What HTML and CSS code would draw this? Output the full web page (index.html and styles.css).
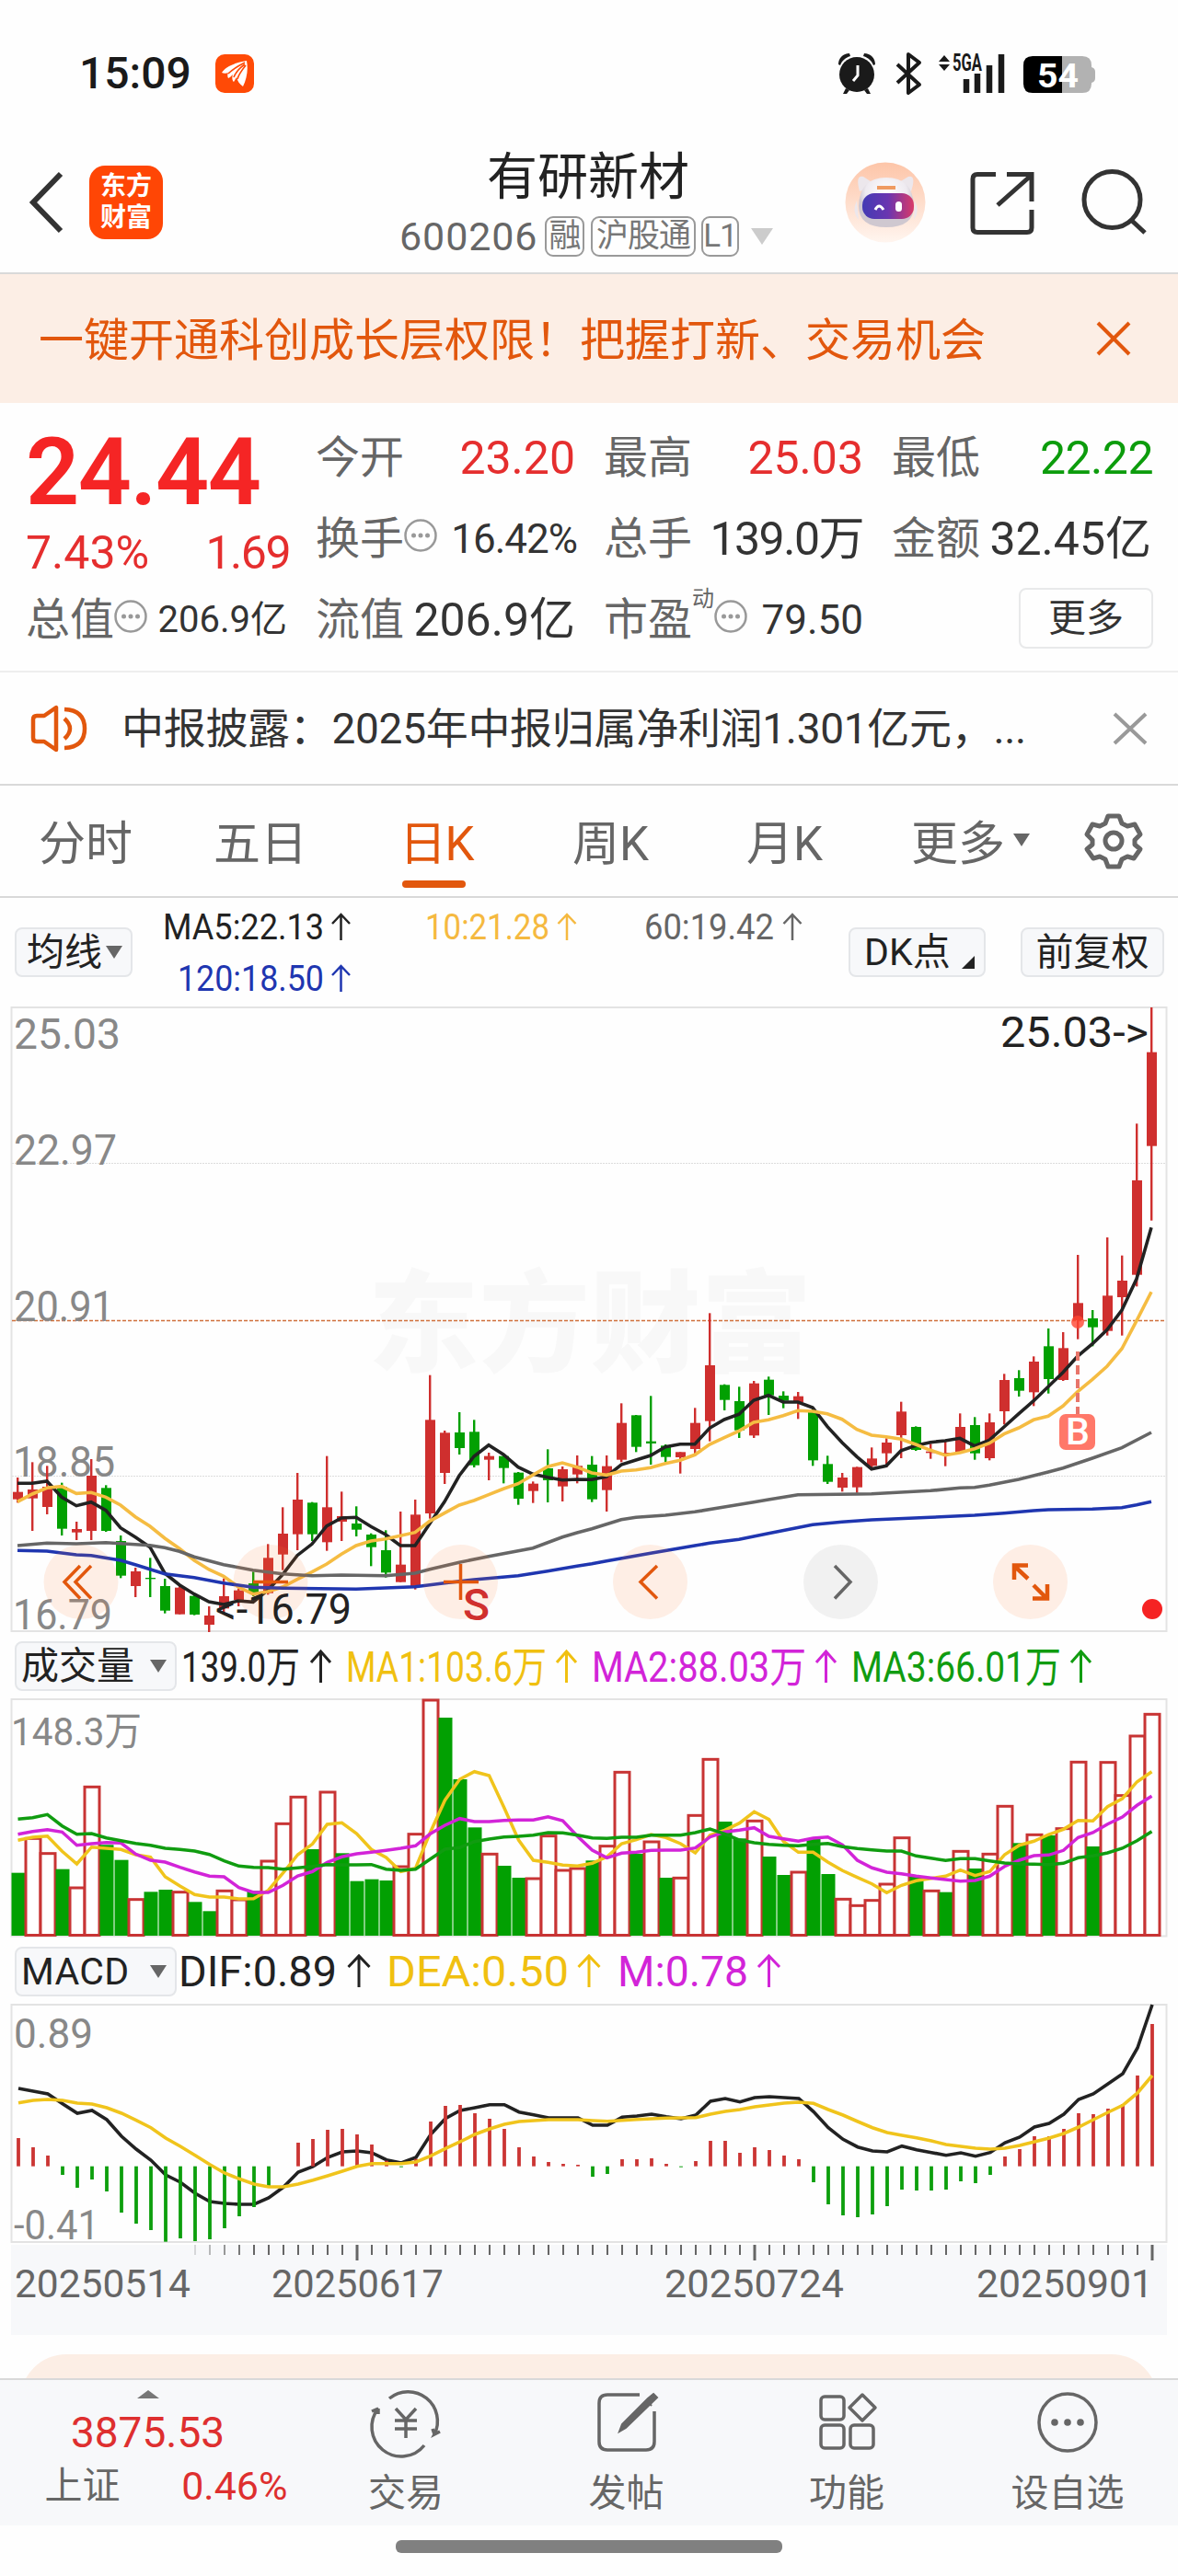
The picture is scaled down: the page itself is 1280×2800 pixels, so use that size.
FILE: index.html
```html
<!DOCTYPE html>
<html lang="zh-CN">
<head>
<meta charset="utf-8">
<title>有研新材 600206</title>
<link rel="stylesheet" href="styles.css">
</head>
<body>
<div class="status">
  <span class="clock">15:09</span>
  <svg class="app-badge" width="42" height="42" viewBox="0 0 42 42"><rect width="42" height="42" rx="10" fill="#ff4a06"/><path d="M34 7C22 9 11 13 7 20c2 1 5 1 7 0-1 2-1 4 0 6 2-1 3-2 5-4-1 3-1 6 1 8l3-5c1 4 3 7 7 10 4-8 6-18 4-28z" fill="#fff"/><path d="M32 9C26 12 19 16 14 21M32 11c-6 4-10 9-12 14M33 12c-4 5-8 10-9 15" stroke="#ff4a06" stroke-width="1.6" fill="none"/></svg>
  <svg class="status-icons" width="284" height="64" viewBox="908 48 284 64">
    <g fill="#1a1a1a"><circle cx="931" cy="81" r="19"/><path d="M911 70c0-7 5-12 12-12l1 3c-6 2-9 5-11 10zM951 70c0-7-5-12-12-12l-1 3c6 2 9 5 11 10zM919 96l-3 6h4l3-4zM943 96l3 6h-4l-3-4z"/></g>
    <path d="M932 71v11l-5 6" stroke="#fff" stroke-width="3" fill="none"/>
    <path d="M975 70l24 22-12 9V59l12 9-24 22" stroke="#1a1a1a" stroke-width="4" fill="none" stroke-linejoin="round"/>
    <path d="M1020 67l6-7 6 7zM1020 70l6 7 6-7z" fill="#1a1a1a"/>
    <text x="1035" y="77" class="net" textLength="32" lengthAdjust="spacingAndGlyphs">5GA</text>
    <path d="M1050 86v15M1062 80v21M1075 71v30M1088 59v42" stroke="#1a1a1a" stroke-width="6.500"/>
    <path d="M1154 61h22q10 0 10 10v2q4 1 4 5v7q0 4-4 5v1q0 10-10 10h-22z" fill="#b2b2b2"/>
    <path d="M1154 61v40h-32q-10 0-10-10V71q0-10 10-10z"/>
    <text x="1127" y="95" class="battery" textLength="45" lengthAdjust="spacingAndGlyphs">54</text>
  </svg>
</div>

<header class="header">
  <svg width="40" height="70" viewBox="30 184 40 70"><path d="M66 188L36 219l30 31" fill="none" stroke="#333" stroke-width="6"/></svg>
  <div class="brand">东方<br>财富</div>
  <div class="title-block">
    <h1>有研新材</h1>
    <div class="code"><span class="digits">600206</span><i class="tag t1">融</i><i class="tag t2">沪股通</i><i class="tag t3">L1</i><svg width="24" height="18"><path d="M0 0h24L12 18z" fill="#ccc"/></svg></div>
  </div>
  <svg class="actions" width="334" height="90" viewBox="916 173 334 90">
    <defs>
      <linearGradient id="halo" x2="0" y2="1"><stop stop-color="#fdc5a8"/><stop offset="1" stop-color="#fff5ef"/></linearGradient>
      <linearGradient id="visor"><stop stop-color="#433bb4"/><stop offset=".5" stop-color="#6a35b0"/><stop offset="1" stop-color="#d93a68"/></linearGradient>
      <radialGradient id="shell" cy=".3"><stop stop-color="#fff"/><stop offset=".75" stop-color="#eeeaf0"/><stop offset="1" stop-color="#cfc8d0"/></radialGradient>
    </defs>
    <circle cx="962" cy="218" r="43.500" fill="url(#halo)"/>
    <path d="M934 206Q929 188 938 190L952 199ZM990 206Q996 188 987 190L972 199ZM931 216q-6 12 2 21zM994 216q6 12-1 21z" fill="#ece7ec"/>
    <path d="M933 222Q934 191 963 191T993 222Q993 245 963 245T933 222Z" fill="url(#shell)"/>
    <rect x="937" y="208" width="56" height="28" rx="13" fill="url(#visor)"/>
    <path d="M951 226q4-8 9 0" stroke="#fff" stroke-width="3" fill="none"/><rect x="973" y="217" width="7" height="11" rx="3.500" fill="#fff"/>
    <path d="M953 202h20" stroke="#ef9b62" stroke-width="4" fill="none"/>
    <g fill="none" stroke="#333" stroke-width="5">
      <path d="M1082 187.500h-20q-5 0-5 5v53q0 5 5 5h54q5 0 5-5V226M1094 187.500h27V217M1120 189l-36 32"/>
      <circle cx="1208.500" cy="215" r="30.500"/><path d="M1229 237l15 14"/>
    </g>
  </svg>
</header>

<div class="banner"><span>一键开通科创成长层权限！把握打新、交易机会</span><svg width="38" height="38" viewBox="0 0 38 38"><path d="M2 2l34 34M36 2L2 36" stroke="#e2570d" stroke-width="4"/></svg></div>

<section class="quote">
  <div class="col first">
    <div class="price">24.44</div>
    <div class="change"><span>7.43%</span><span class="diff">1.69</span></div>
    <div class="cell"><span class="label">总值</span><svg class="info" viewBox="0 0 36 36"><use href="#info-dot"/></svg><b class="small">206.9亿</b></div>
  </div>
  <div class="col">
    <div class="cell"><span class="label">今开</span><b class="up">23.20</b></div>
    <div class="cell"><span class="label">换手</span><svg class="info" viewBox="0 0 36 36"><use href="#info-dot"/></svg><b class="mid turn">16.42%</b></div>
    <div class="cell"><span class="label">流值</span><b>206.9亿</b></div>
  </div>
  <div class="col">
    <div class="cell"><span class="label">最高</span><b class="up">25.03</b></div>
    <div class="cell"><span class="label">总手</span><b class="tight">139.0万</b></div>
    <div class="cell"><span class="label">市盈</span><sup>动</sup><svg class="info" viewBox="0 0 36 36"><use href="#info-dot"/></svg><b class="mid pe">79.50</b></div>
  </div>
  <div class="col">
    <div class="cell"><span class="label">最低</span><b class="down">22.22</b></div>
    <div class="cell"><span class="label">金额</span><b>32.45亿</b></div>
    <div class="cell end"><button class="more">更多</button></div>
  </div>
  <svg class="defs" width="0" height="0"><defs><g id="info-dot"><circle cx="18" cy="18" r="16.500" fill="none" stroke="#999" stroke-width="2.500"/><g fill="#999"><circle cx="10.500" cy="18" r="2.500"/><circle cx="18" cy="18" r="2.500"/><circle cx="25.500" cy="18" r="2.500"/></g></g></defs></svg>
</section>

<div class="notice">
  <svg width="62" height="52" viewBox="33 765 62 52" fill="none" stroke="#e2570d" stroke-width="4.500"><path d="M61 768v46l-13-9H40q-4 0-4-4V781q0-4 4-4h8zM70 780q12 11 0 22M70 770q22 1 22 21t-22 21" stroke-linejoin="round"/></svg>
  <span>中报披露：2025年中报归属净利润1.301亿元，...</span>
  <svg width="36" height="34" viewBox="0 0 36 34"><path d="M1 1l34 32M35 1L1 33" stroke="#999" stroke-width="4"/></svg>
</div>

<nav class="periods">
  <a>分时</a><a>五日</a><a class="on">日K</a><a>周K</a><a>月K</a><a>更多<svg width="18" height="14"><path d="M0 0h18L9 14z" fill="#666"/></svg></a>
  <svg class="gear" width="64" height="62" viewBox="-32 -31 64 62" fill="none" stroke="#666" stroke-width="5" stroke-linejoin="round"><circle r="9"/><path d="M-6-27H6L9-19 15-16 23-18 29-7 23-1V4L29 9 22 19 15 17 9 20 6 28H-6L-9 20-15 17-22 19-29 9-23 4V-1L-29-7-23-18-15-16-9-19Z"/></svg>
</nav>

<div class="averages">
  <button class="chip avg">均线<svg width="18" height="14"><path d="M0 0h18L9 14z" fill="#666"/></svg></button>
  <svg class="avg-values" width="700" height="110" viewBox="178 980 700 110">
    <g font-size="39">
    <text x="177" y="1021" textLength="175" lengthAdjust="spacingAndGlyphs" fill="#222">MA5:22.13</text>
    <text x="462" y="1021" textLength="135" lengthAdjust="spacingAndGlyphs" fill="#f5b940">10:21.28</text>
    <text x="700" y="1021" textLength="141" lengthAdjust="spacingAndGlyphs" fill="#666">60:19.42</text>
    <text x="193" y="1077" textLength="159" lengthAdjust="spacingAndGlyphs" fill="#1f36b0">120:18.50</text>
    </g>
    <g fill="none" stroke-width="2.500">
    <path d="M370.500 1022v-28M361 1004l9.500-10 9.500 10" stroke="#222"/>
    <path d="M616 1022v-28M606.500 1004l9.500-10 9.500 10" stroke="#f5b940"/>
    <path d="M861 1022v-28M851.500 1004l9.500-10 9.500 10" stroke="#666"/>
    <path d="M370.500 1078v-28M361 1060l9.500-10 9.500 10" stroke="#1f36b0"/>
    </g>
  </svg>
  <button class="chip dk">DK点<svg width="14" height="14"><path d="M14 0v14H0z" fill="#222"/></svg></button>
  <button class="chip adj">前复权</button>
</div>

<svg class="panel" width="1280" height="680" viewBox="0 1094 1280 680">
  <text class="mark" x="400" y="1482" textLength="482">东方财富</text>
  <path class="frame" d="M12.500 1095H1267.500V1773H12.500Z"/>
  <path class="dots" d="M13 1264.500H1267M13 1604.500H1267"/>
  <path d="M13 1435.500H1267" stroke="#d0703c" stroke-width="1.500" stroke-dasharray="4 2"/>
  <g class="axis" font-size="47">
    <text x="15" y="1140" textLength="116" lengthAdjust="spacingAndGlyphs">25.03</text>
    <text x="15" y="1266" textLength="112" lengthAdjust="spacingAndGlyphs">22.97</text>
    <text x="15" y="1436" textLength="109" lengthAdjust="spacingAndGlyphs">20.91</text>
    <text x="14" y="1605" textLength="111" lengthAdjust="spacingAndGlyphs">18.85</text>
    <text x="14" y="1771" textLength="108" lengthAdjust="spacingAndGlyphs">16.79</text>
  </g>
  <g id="candles"></g>
  <g fill="#fe7a35" fill-opacity=".12"><circle cx="88" cy="1719.500" r="40.500"/><circle cx="294" cy="1719.500" r="40.500"/><circle cx="500.500" cy="1719.500" r="40.500"/><circle cx="706.500" cy="1719.500" r="40.500"/><circle cx="1119.500" cy="1719.500" r="40.500"/><circle cx="913.500" cy="1719.500" r="40.500" fill="#000" fill-opacity=".05"/></g>
  <g fill="none" stroke="#e2570d" stroke-width="3.500">
    <path d="M87 1702L70 1719.500l17 18M99 1702L82 1719.500l17 18M275 1719.500h38M482 1719.500h38M500.500 1700v39M714 1702L696 1719.500l18 18"/>
    <path d="M1102 1717v-15.500h15M1102 1702l15 14M1138 1722v15.500h-16M1138 1738l-15-15" stroke-width="4.500"/>
    <path d="M907 1702l17 17.500-17 18" stroke="#666"/>
  </g>
  <text x="1087" y="1138" font-size="47" textLength="161" lengthAdjust="spacingAndGlyphs" fill="#222">25.03-&gt;</text>
  <text x="234" y="1765" font-size="47" textLength="148" lengthAdjust="spacingAndGlyphs" fill="#222">&lt;-16.79</text>
  <text x="503" y="1761" font-size="48" font-weight="500" fill="#d0302e">S</text>
  <path d="M1171 1469v68" stroke="#e8756a" stroke-width="4" stroke-dasharray="10 5"/>
  <rect x="1151" y="1537" width="39" height="39" rx="7" fill="#ff7869"/>
  <text x="1171" y="1570" font-size="41" text-anchor="middle" font-weight="500" fill="#fff">B</text>
  <circle cx="1171" cy="1437" r="7" fill="#ff4632" fill-opacity=".8"/>
  <circle cx="1252" cy="1749" r="11" fill="#f52323"/>
</svg>

<div class="legend">
  <button class="chip sub">成交量<svg width="18" height="14"><path d="M0 0h18L9 14z" fill="#666"/></svg></button>
  <svg width="1070" height="60" viewBox="192 1780 1070 60">
    <g font-size="46">
    <text x="197" y="1827" textLength="129" lengthAdjust="spacingAndGlyphs" fill="#222">139.0万</text>
    <text x="376" y="1827" textLength="218" lengthAdjust="spacingAndGlyphs" fill="#f0c010">MA1:103.6万</text>
    <text x="643" y="1827" textLength="233" lengthAdjust="spacingAndGlyphs" fill="#d224d8">MA2:88.03万</text>
    <text x="925" y="1827" textLength="228" lengthAdjust="spacingAndGlyphs" fill="#109c10">MA3:66.01万</text>
    </g>
    <g fill="none" stroke-width="3">
    <path d="M348.500 1828v-34M338 1806l10.500-12 10.500 12" stroke="#222"/>
    <path d="M615.500 1828v-34M605 1806l10.500-12 10.500 12" stroke="#f0c010"/>
    <path d="M897.500 1828v-34M887 1806l10.500-12 10.500 12" stroke="#d224d8"/>
    <path d="M1174.500 1828v-34M1164 1806l10.500-12 10.500 12" stroke="#109c10"/>
    </g>
  </svg>
</div>

<svg class="panel" width="1280" height="260" viewBox="0 1846 1280 260">
  <path class="frame" d="M12.500 1847H1267.500V2104.500H12.500Z"/>
  <g id="volume"></g>
  <text class="axis" x="12" y="1897" font-size="43" textLength="142" lengthAdjust="spacingAndGlyphs">148.3万</text>
</svg>

<div class="legend">
  <button class="chip sub macd">MACD<svg width="18" height="14"><path d="M0 0h18L9 14z" fill="#666"/></svg></button>
  <svg width="1070" height="60" viewBox="192 2113 1070 60">
    <g font-size="46">
    <text x="194" y="2159" textLength="172" lengthAdjust="spacingAndGlyphs" fill="#222">DIF:0.89</text>
    <text x="420" y="2159" textLength="198" lengthAdjust="spacingAndGlyphs" fill="#f0c010">DEA:0.50</text>
    <text x="671" y="2159" textLength="142" lengthAdjust="spacingAndGlyphs" fill="#d224d8">M:0.78</text>
    </g>
    <g fill="none" stroke-width="3">
    <path d="M390 2160v-34M378.500 2138l11.500-12 11.500 12" stroke="#222"/>
    <path d="M640 2160v-34M628.500 2138l11.500-12 11.500 12" stroke="#f0c010"/>
    <path d="M835.500 2160v-34M824 2138l11.500-12 11.500 12" stroke="#d224d8"/>
    </g>
  </svg>
</div>

<svg class="panel" width="1280" height="360" viewBox="0 2178 1280 360">
  <path class="frame" d="M12.500 2179H1267.500V2437H12.500Z"/>
  <rect x="12" y="2440" width="1256" height="98" fill="#f7f8fa"/>
  <g class="axis" font-size="44">
    <text x="15" y="2226" textLength="86" lengthAdjust="spacingAndGlyphs">0.89</text>
    <text x="15" y="2434" textLength="93" lengthAdjust="spacingAndGlyphs">-0.41</text>
  </g>
  <g id="macd"></g>
  <g font-size="43" fill="#666">
    <text x="16" y="2497" textLength="191" lengthAdjust="spacingAndGlyphs">20250514</text>
    <text x="295" y="2497" textLength="187" lengthAdjust="spacingAndGlyphs">20250617</text>
    <text x="722" y="2497" textLength="195" lengthAdjust="spacingAndGlyphs">20250724</text>
    <text x="1061" y="2497" textLength="192" lengthAdjust="spacingAndGlyphs">20250901</text>
  </g>
</svg>

<div class="peek"><div class="peek-card"></div></div>

<footer class="toolbar">
  <div class="index">
    <svg width="24" height="9"><path d="M12 0l12 9H0z" fill="#777"/></svg>
    <strong>3875.53</strong>
    <div class="index-row"><span>上证</span><em>0.46%</em></div>
  </div>
  <div class="tool"><svg width="80" height="70" viewBox="-40 -35 80 70" fill="none" stroke="#666" stroke-width="3.500"><path d="M-18-26A32 32 0 0 1 31 13L37 10M31 13L29 7M20 25A32 32 0 0 1-30-15L-37-12M-30-15V-9M-11-15L0-3 11-15M0-3V17M-12-2H12M-12 7H12"/></svg><span>交易</span></div>
  <div class="tool"><svg width="80" height="70" viewBox="-40 -35 80 70" fill="none" stroke="#666" stroke-width="3.500"><path d="M14-30H-21Q-30-30-30-21V21Q-30 30-21 30H21Q30 30 30 21V-12"/><path d="M29-31L33-27-1 6-8 10-5 2 23-26ZM22-24L27-18" fill="#666" stroke-width="2"/></svg><span>发帖</span></div>
  <div class="tool"><svg width="80" height="70" viewBox="-40 -35 80 70" fill="none" stroke="#666" stroke-width="3.500"><rect x="-28" y="-28" width="25" height="25" rx="4"/><rect x="-28" y="3" width="25" height="25" rx="4"/><rect x="4" y="3" width="25" height="25" rx="4"/><path d="M17-30L31-16 17-2 3-16Z" stroke-linejoin="round"/></svg><span>功能</span></div>
  <div class="tool"><svg width="80" height="70" viewBox="-40 -35 80 70"><circle r="31" fill="none" stroke="#666" stroke-width="3.500"/><g fill="#666"><circle cx="-14" r="3.800"/><circle r="3.800"/><circle cx="14" r="3.800"/></g></svg><span>设自选</span></div>
</footer>
<div class="home"><i></i></div>
<script src="chart.js"></script>
</body>
</html>
```
FILE: styles.css
```css
* { box-sizing: border-box; }
body {
  margin: 0;
  width: 1280px;
  height: 2800px;
  overflow: hidden;
  background: #fefefe;
  color: #333;
  font-family: Roboto, "Noto Sans CJK SC", sans-serif;
}
svg { display: block; flex: none; overflow: visible; }
svg text { font-family: Roboto, "Noto Sans CJK SC", sans-serif; }
button { font: inherit; padding: 0; background: none; }
i, em { font-style: normal; }

.status { display: flex; align-items: center; height: 160px; padding: 0 88px 0 86px; }
.clock { width: 148px; font-size: 48px; font-weight: 500; line-height: 56px; color: #1a1a1a; }
.status-icons { margin-left: auto; }
.net { font-size: 26px; font-weight: 700; fill: #1a1a1a; }
.battery { font-size: 36px; font-weight: 700; fill: #fff; }

.header {
  display: grid;
  grid-template-columns: 67px 80px 1fr 334px;
  align-items: center;
  height: 138px;
  padding: 0 30px 20px;
  border-bottom: 2px solid #d9d9d9;
}
.brand {
  height: 80px;
  padding: 6px 0;
  border-radius: 17px;
  background: #ff4605;
  color: #fff;
  font-size: 28px;
  font-weight: 700;
  line-height: 34px;
  text-align: center;
}
h1 { margin: 0 0 0 352px; font-size: 55px; font-weight: 400; line-height: 64px; color: #222; white-space: nowrap; }
.code { display: flex; align-items: center; margin: 11px 0 0 257px; height: 44px; font-size: 43px; color: #666; }
.digits { width: 158px; letter-spacing: .9px; }
.tag { height: 44px; border: 2px solid #999; border-radius: 9px; font-size: 35px; line-height: 39px; text-align: center; letter-spacing: -1px; color: #777; }
.t1 { width: 43px; margin-right: 7px; }
.t2 { width: 114px; margin-right: 6px; }
.t3 { width: 41px; margin-right: 13px; }

.banner { display: flex; align-items: center; justify-content: space-between; height: 140px; padding: 0 51px 0 42px; background: #fceee5; color: #e2570d; font-size: 49px; line-height: 60px; }
.banner span { padding-top: 5px; }

.quote { display: grid; grid-template-columns: repeat(4, 282px); column-gap: 31px; height: 293px; padding: 16px 0 0 30px; border-bottom: 2px solid #eee; }
.first { margin-left: -2px; }
.price { height: 117px; font-size: 102px; font-weight: 600; line-height: 119px; letter-spacing: -1.500px; color: #f52525; }
.change { display: flex; align-items: center; justify-content: space-between; height: 59px; font-size: 50px; color: #e52e2e; }
.diff { margin-right: -3px; letter-spacing: -1.500px; }
.cell { display: flex; align-items: center; justify-content: space-between; height: 88px; }
.label { font-size: 48px; line-height: 60px; color: #666; }
.cell b { font-size: 50px; font-weight: 400; line-height: 60px; white-space: nowrap; }
.cell b.up { color: #e52e2e; }
.cell b.down { margin-right: -2px; letter-spacing: -.5px; color: #0c9c0c; }
.cell b.small { font-size: 40px; }
.cell b.mid { font-size: 44px; }
.cell b.turn { margin-right: -2px; letter-spacing: -1px; }
.cell b.tight { letter-spacing: -1.500px; }
.cell .info { width: 36px; height: 36px; margin-top: -8px; }
.cell .info + b { margin-left: auto; }
.cell sup { align-self: flex-start; margin-top: 6px; font-size: 24px; line-height: 30px; color: #666; }
.cell.end { justify-content: flex-end; }
.more { width: 146px; height: 66px; margin: -5px -2px 0 0; border: 2px solid #e8e9ea; border-radius: 8px; font-size: 41px; line-height: 58px; color: #333; }
.defs { position: absolute; }

.notice { display: grid; grid-template-columns: 99px 1fr 36px; align-items: center; height: 123px; padding: 0 34px 0 33px; border-bottom: 2px solid #d9d9d9; font-size: 46px; line-height: 60px; letter-spacing: -.3px; }

.periods { display: grid; grid-template-columns: 190px 204px 186px 189px 179px 188px 64px; align-items: center; height: 122px; padding-left: 42px; border-bottom: 2px solid #d9d9d9; font-size: 51px; color: #666; }
.periods a { display: flex; align-items: center; height: 120px; padding-bottom: 2px; }
.periods a svg { margin-left: 9px; }
.periods .on { position: relative; margin-left: -2px; letter-spacing: -1.500px; color: #e2570d; }
.periods .on::after { content: ""; position: absolute; left: 3px; bottom: 9px; width: 69px; height: 8px; border-radius: 4px; background: #e2570d; }

.averages { display: flex; align-items: center; height: 118px; padding: 0 15px 0 16px; }
.chip { display: flex; align-items: center; height: 54px; border: 2px solid #e4e6e9; border-radius: 8px; background: #f7f8fa; font-size: 41px; line-height: 50px; color: #222; white-space: nowrap; }
.avg { width: 128px; margin-right: 34px; padding-left: 11px; }
.avg svg { margin-left: 4px; }
.avg-values { margin-right: 44px; }
.dk { width: 149px; padding-left: 15px; }
.dk svg { margin: 22px 0 0 12px; }
.adj { width: 156px; margin-left: auto; justify-content: center; }

.frame { fill: none; stroke: #e3e3e3; stroke-width: 2; }
.dots { stroke: #ddd; stroke-width: 1; stroke-dasharray: 2 1; }
.axis { fill: #888; }
.mark { font-size: 120px; font-weight: 900; fill: #f8f8f8; }
.legend { display: flex; align-items: center; height: 72px; padding-left: 16px; padding-top: 2px; }
.sub { width: 176px; padding: 0 9px 0 5px; justify-content: space-between; }
.macd { letter-spacing: .3px; }

.peek { height: 47px; padding: 21px 22px 0; overflow: hidden; }
.peek-card { height: 100px; border-radius: 50px; background: #fceee5; }
.toolbar { display: grid; grid-template-columns: 321px 240px 239px 240px 240px; height: 160px; border-top: 2px solid #d9d9d9; background: #f7f8fa; }
.index { display: flex; flex-direction: column; align-items: center; padding-top: 11px; color: #de2f2f; }
.index strong { margin-top: 10px; font-size: 46px; font-weight: 400; line-height: 54px; }
.index-row { display: flex; justify-content: space-between; width: 264px; margin: 1px 0 0 40px; font-size: 43px; line-height: 60px; }
.index-row span { font-size: 41px; color: #666; }
.tool { display: flex; flex-direction: column; align-items: center; padding-top: 11px; font-size: 41px; line-height: 56px; color: #666; }
.tool span { margin-top: 14px; }
.home { display: flex; justify-content: center; padding-top: 16px; }
.home i { width: 420px; height: 14px; border-radius: 6px; background: #808080; }
```
FILE: chart.js
```js
const NS = 'http://www.w3.org/2000/svg';
const RED = '#cf2f2e';
const GREEN = '#02a002';

function add(parent, tag, attrs) {
  const el = document.createElementNS(NS, tag);
  for (const key in attrs) el.setAttribute(key, attrs[key]);
  parent.appendChild(el);
}

// Draws a polyline; each point is a value or [index, value] when days are skipped.
function line(parent, points, x0, toY, color, width) {
  const pts = points.map((p, i) => Array.isArray(p) ? [x0 + 16 * p[0], toY(p[1])] : [x0 + 16 * i, toY(p)]);
  add(parent, 'polyline', { points: pts.map(p => p[0] + ',' + p[1].toFixed(1)).join(' '), fill: 'none', stroke: color, 'stroke-width': width || 3.6 });
}

// Daily candles: colour, high, body top, body bottom, low.
const candles = `r 558 605 629 640|r 508 597 626 732|r 520 588 654 678|g 575 588 725 747|r 702 726 737 762|r 498 552 732 762|g 583 592 732 735|g 747 765 878 886|r 852 864 912 948|g 820 885 889 948|g 888 912 992 1001|r 912 917 1004 1004|g 942 944 1005 1007|r 978 1008 1038 1062|r 887 945 985 998|r 920 926 957 978|g 865 903 935 945|r 775 820 935 940|r 655 741 809 860|r 543 630 743 795|g 638 640 743 765|r 488 655 769 797|r 604 684 702 765|g 652 708 728 750|g 740 744 785 847|g 730 795 868 884|r 669 842 899 899|r 630 679 915 923|r 224 370 675 692|r 405 412 543 579|g 345 411 462 483|g 370 409 518 525|r 477 488 500 567|g 485 488 527 577|g 540 542 627 647|r 571 578 602 641|g 466 528 567 639|r 522 531 587 636|r 486 520 548 577|g 488 516 629 638|r 486 521 599 669|r 316 380 500 508|g 354 355 458 475|g 292 440 447 516|g 450 454 491 507|r 475 475 492 545|r 331 380 465 487|r 22 192 374 440|g 254 256 305 339|g 262 309 404 429|r 243 251 421 429|g 229 239 290 354|g 277 291 307 332|r 279 293 312 367|g 330 340 502 520|g 487 514 572 579|r 543 558 591 604|r 523 524 590 608|r 460 496 520 533|r 430 444 479 525|r 311 343 420 495|g 391 393 468 471|r 448 473 478 497|r 440 477 482 521|r 349 393 475 478|g 361 387 479 500|r 349 378 495 502|r 220 240 342 385|g 208 234 275 294|r 163 180 280 325|g 72 130 237 284|r 84 136 240 243|r -168 -11 45 107|g 12 39 68 130|r -225 -35 80 95|r -166 -84 -30 95|r -596 -411 -103 -65|r -975 -829 -523 -280`;
const priceY = v => 1420 + v / 3;
const price = document.getElementById('candles');
candles.split('|').forEach((row, i) => {
  const [c, ...v] = row.split(' ');
  const [high, top, bottom, low] = v.map(n => priceY(+n));
  const color = c === 'r' ? RED : GREEN;
  const x = 19.2 + 16 * i;
  add(price, 'rect', { x: x - 1.2, y: high, width: 2.4, height: low - high, fill: color });
  add(price, 'rect', { x: x - 5.2, y: top, width: 11, height: bottom - top, fill: color });
});
line(price, [577,577,570,622,650,638,665,722,752,785,870,908,938,963,972,960,964,925,875,812,775,716,690,688,718,744,780,780,708,637,552,489,452,483,524,547,557,566,564,565,555,516,501,486,458,449,449,397,369,352,306,290,312,312,330,392,444,490,530,520,470,454,443,438,430,455,436,393,350,308,262,215,162,122,76,12,-90,-257], 19, priceY, '#222');
line(price, [637,612,592,587,610,607,622,648,686,717,756,790,828,858,880,915,938,930,915,890,866,840,808,780,765,758,748,737,700,674,648,633,614,595,578,550,523,510,524,543,550,537,533,526,512,502,484,450,428,406,378,370,356,340,342,350,368,401,420,425,433,450,469,485,477,464,446,416,396,370,358,325,278,238,195,138,47,-47], 19, priceY, '#f5bc42');
line(price, [[0,780],[2,772],[4,774],[6,770],[8,776],[9,779],[10,787],[11,799],[12,817],[14,842],[16,860],[18,872],[20,878],[22,876],[25,878],[27,870],[28,857],[30,835],[32,815],[35,788],[37,752],[38,738],[39,725],[40,710],[41,695],[42,688],[44,681],[46,670],[48,654],[50,638],[51,630],[53,614],[57,612],[58,611],[60,606],[62,601],[64,592],[65,590],[66,583],[68,564],[70,540],[71,527],[73,495],[75,461],[77,411]], 19, priceY, '#666');
line(price, [[0,796],[2,798],[4,810],[5,812],[7,828],[8,842],[10,872],[12,884],[14,902],[16,916],[18,919],[23,922],[27,914],[29,902],[31,891],[34,878],[36,863],[38,847],[39,839],[40,830],[43,805],[46,780],[47,772],[49,760],[51,740],[54,712],[56,703],[58,696],[62,688],[65,681],[67,674],[69,666],[70,663],[73,661],[75,656],[76,647],[77,637]], 19, priceY, '#1f36b0');

// Volume bars: colour and bar top.
const volumes = 'g767 r655 r704 g755 r816 r487 g676 g725 r854 g829 g822 r830 g862 g892 r826 r855 g826 r729 r607 r520 g690 r504 g703 g794 g788 g792 r747 r641 r204 g261 g462 g619 r706 g744 g783 r786 r647 r759 r753 g727 r680 r439 g705 r666 g783 r784 r580 r397 g600 g655 r598 g714 g774 r765 g655 g771 r853 r874 r857 r804 r653 g780 r826 g830 r697 g753 r706 r550 g670 r643 g645 r623 r406 g681 r407 r515 r321 r250';
const volumeY = v => 1780 + v / 3;
const volume = document.getElementById('volume');
volumes.split(' ').forEach((bar, i) => {
  const y = volumeY(+bar.slice(1));
  const x = 19.5 + 16 * i;
  const base = 2103.5;
  if (bar[0] === 'g') add(volume, 'rect', { x: x - 7, y, width: 15, height: base + 0.5 - y, fill: GREEN });
  else add(volume, 'rect', { x: x - 7.5, y, width: 16, height: base - y, fill: '#fff', stroke: '#c83434', 'stroke-width': 3 });
});
line(volume, [661,651,647,697,738,683,687,691,708,716,780,810,838,846,846,852,851,824,768,708,673,609,604,639,691,717,763,752,635,530,462,437,450,553,660,726,733,742,745,736,715,672,659,642,652,672,702,644,628,605,568,593,665,700,700,732,760,782,803,832,808,793,785,778,758,776,763,708,677,664,642,625,596,598,551,525,470,437], 19.5, volumeY, '#f0c41c', 3.5);
line(volume, [641,632,626,634,677,672,668,670,706,726,732,749,764,778,780,815,831,831,808,777,763,733,715,705,700,694,687,679,640,612,590,600,600,596,595,595,584,597,648,693,718,703,700,694,693,693,686,650,634,628,620,648,656,664,654,650,676,726,751,765,770,778,784,789,794,792,778,746,726,711,709,694,652,636,608,585,547,517], 19.5, volumeY, '#d224d8', 3.5);
line(volume, [592,587,577,614,641,639,653,662,671,677,687,691,696,707,728,745,749,750,755,751,746,740,741,741,740,755,759,755,722,690,685,665,657,650,648,644,636,637,644,653,655,651,651,644,644,644,636,624,640,660,669,674,677,679,674,671,682,688,692,696,696,712,719,727,721,721,728,735,738,739,740,736,718,712,702,687,662,632], 19.5, volumeY, '#109c10', 3.5);

const macdY = v => 2150 + v / 3;
const macd = document.getElementById('macd');
line(macd, [360,369,378,410,441,432,462,516,558,594,642,666,702,729,735,738,738,717,682,633,615,585,567,564,570,593,603,585,510,458,432,423,413,413,437,446,456,456,456,480,480,454,450,444,452,459,447,402,393,404,390,387,390,393,436,488,526,551,564,567,548,560,569,578,570,581,569,537,519,486,474,444,396,378,345,312,228,87], 20, macdY, '#222');
[522,552,579,642,684,657,696,765,801,822,860,849,858,852,816,777,747,684,614,537,525,495,492,510,543,596,617,590,468,417,414,441,459,492,552,582,600,606,609,648,639,591,591,588,606,617,597,531,531,570,552,561,579,591,666,738,774,780,771,744,690,693,693,690,663,669,642,582,558,516,516,492,441,444,426,411,318,150].forEach((v, i) => {
  const y = macdY(Math.min(v, 614));
  add(macd, 'rect', { x: 18.1 + 16 * i, y, width: 3.8, height: Math.abs(v - 614) / 3, fill: v < 614 ? '#cb3533' : '#0d9f0d' });
});
line(macd, [407,399,396,399,408,411,423,441,464,488,522,549,578,608,636,655,672,681,681,672,659,645,630,614,605,605,605,600,580,556,534,510,492,477,468,465,462,462,462,465,467,464,461,459,457,456,455,444,435,429,420,414,408,405,409,429,447,468,488,504,513,521,531,543,549,555,558,555,546,534,522,507,486,462,438,415,375,318], 20, macdY, '#f0c41c');
for (let i = 12; i < 78; i++) {
  const major = i === 23 || i === 50 || i === 77;
  add(macd, 'rect', { x: 19 + 16 * i - (major ? 0.5 : 0), y: 2440, width: major ? 3 : 2, height: major ? 17 : 11, fill: '#666', opacity: Math.min(1, (i - 11) * 0.22) });
}
```
